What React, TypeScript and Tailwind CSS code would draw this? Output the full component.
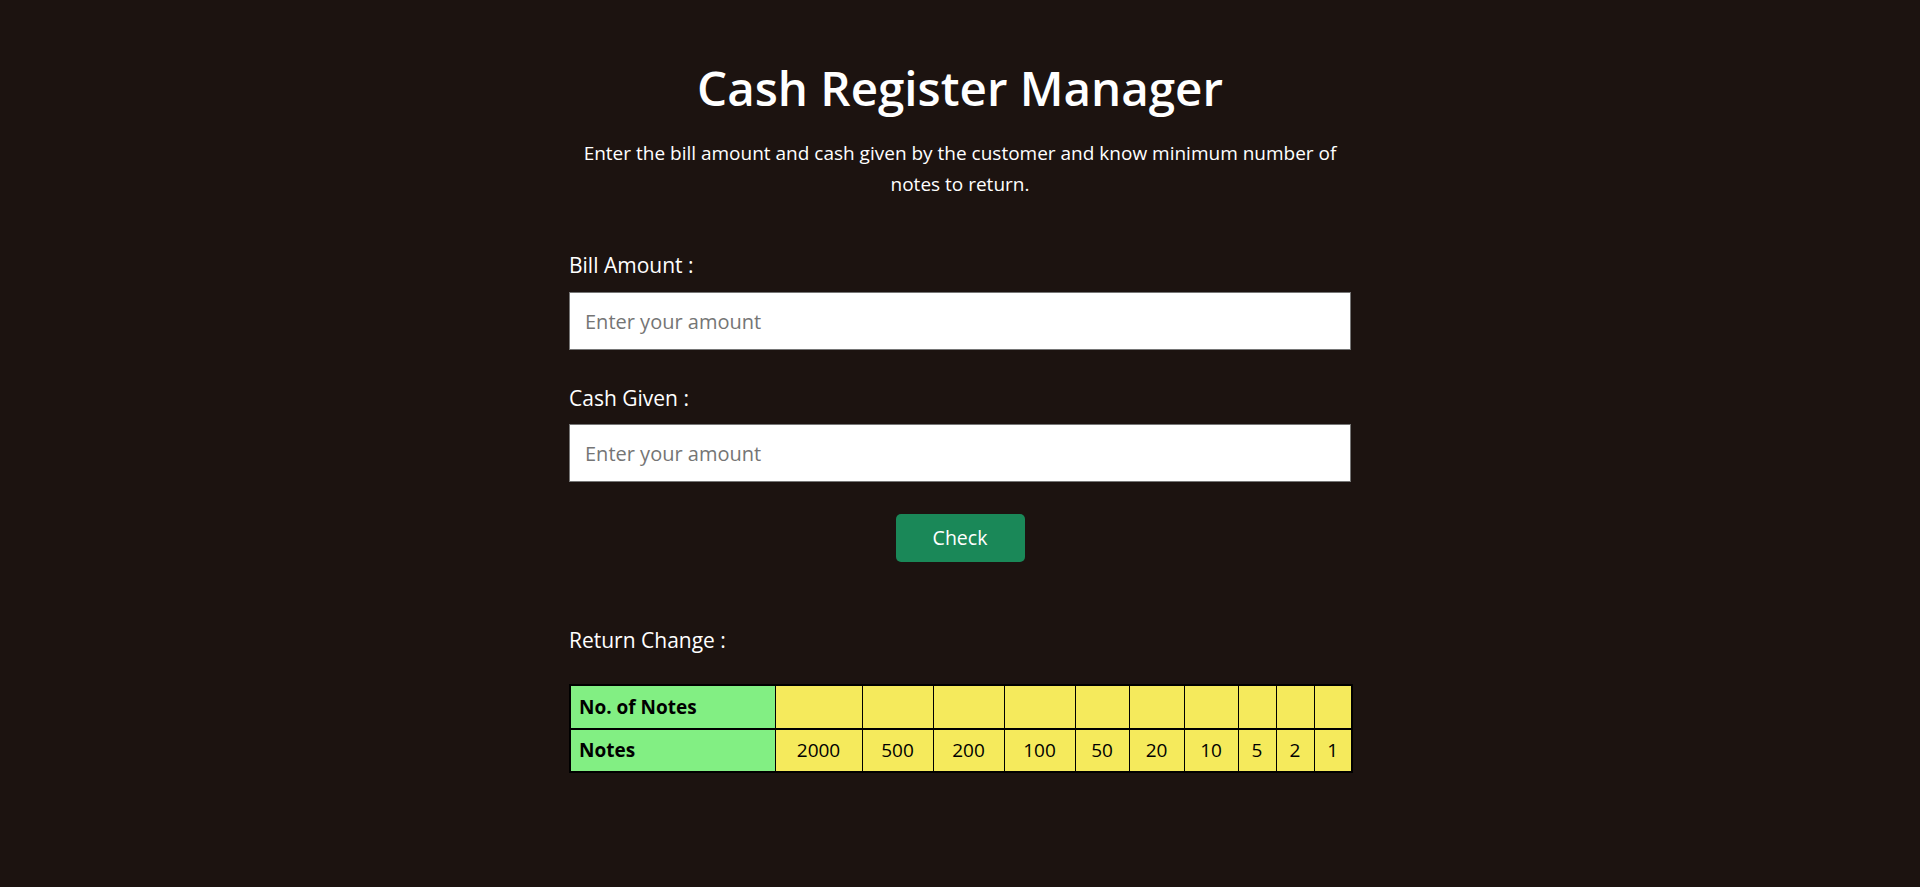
import { useState } from 'react';

const NOTES = [2000, 500, 200, 100, 50, 20, 10, 5, 2, 1];
const COL_WIDTHS = ['w-[87px]', 'w-[71px]', 'w-[71px]', 'w-[71px]', 'w-[54px]', 'w-[55px]', 'w-[54px]', 'w-[38px]', 'w-[38px]', 'w-[38px]'];

export default function App() {
  const [bill, setBill] = useState('');
  const [cash, setCash] = useState('');
  const [counts, setCounts] = useState<(number | null)[]>(NOTES.map(() => null));

  const check = () => {
    let rest = Number(cash) - Number(bill);
    if (!(rest > 0)) return;
    setCounts(
      NOTES.map((n) => {
        const c = Math.floor(rest / n);
        rest = rest % n;
        return c;
      })
    );
  };

  return (
    <div className="min-h-screen bg-[#1c1310] text-white font-['Open_Sans',sans-serif]">
      <div className="mx-auto w-[782px] pt-[56px] flex flex-col">
        <h1 className="text-center text-[47.5px] leading-[64px] font-semibold">Cash Register Manager</h1>
        <p className="mt-[18px] text-center text-[19px] leading-[31px]">
          Enter the bill amount and cash given by the customer and know minimum number of notes to return.
        </p>

        <label className="mt-[51px] text-[21px] leading-[28px]">Bill Amount :</label>
        <input
          value={bill}
          onChange={(e) => setBill(e.target.value)}
          placeholder="Enter your amount"
          className="mt-[13px] h-[58px] w-full bg-white border border-[#767676] px-[15px] text-[20px] text-black placeholder:text-[#757575] outline-none"
        />

        <label className="mt-[34px] text-[21px] leading-[28px]">Cash Given :</label>
        <input
          value={cash}
          onChange={(e) => setCash(e.target.value)}
          placeholder="Enter your amount"
          className="mt-[12px] h-[58px] w-full bg-white border border-[#767676] px-[15px] text-[20px] text-black placeholder:text-[#757575] outline-none"
        />

        <button
          onClick={check}
          className="mt-[32px] self-center w-[129px] h-[48px] rounded-[5px] bg-[#1a8858] text-white text-[19.5px]"
        >
          Check
        </button>

        <div className="mt-[64px] text-[21px] leading-[28px]">Return Change :</div>

        <table className="mt-[30px] w-full table-fixed border-collapse border-2 border-black text-black text-[19px]">
          <tbody>
            <tr className="h-[44px] border-b-2 border-black">
              <td className="w-[205px] bg-[#82ef83] border border-black pl-[8px] font-bold">No. of Notes</td>
              {COL_WIDTHS.map((w, i) => (
                <td key={i} className={`${w} bg-[#f5ea5c] border border-black text-center`}>
                  {counts[i] ?? ''}
                </td>
              ))}
            </tr>
            <tr className="h-[43px]">
              <td className="bg-[#82ef83] border border-black pl-[8px] font-bold">Notes</td>
              {NOTES.map((n) => (
                <td key={n} className="bg-[#f5ea5c] border border-black text-center">
                  {n}
                </td>
              ))}
            </tr>
          </tbody>
        </table>
      </div>
    </div>
  );
}
